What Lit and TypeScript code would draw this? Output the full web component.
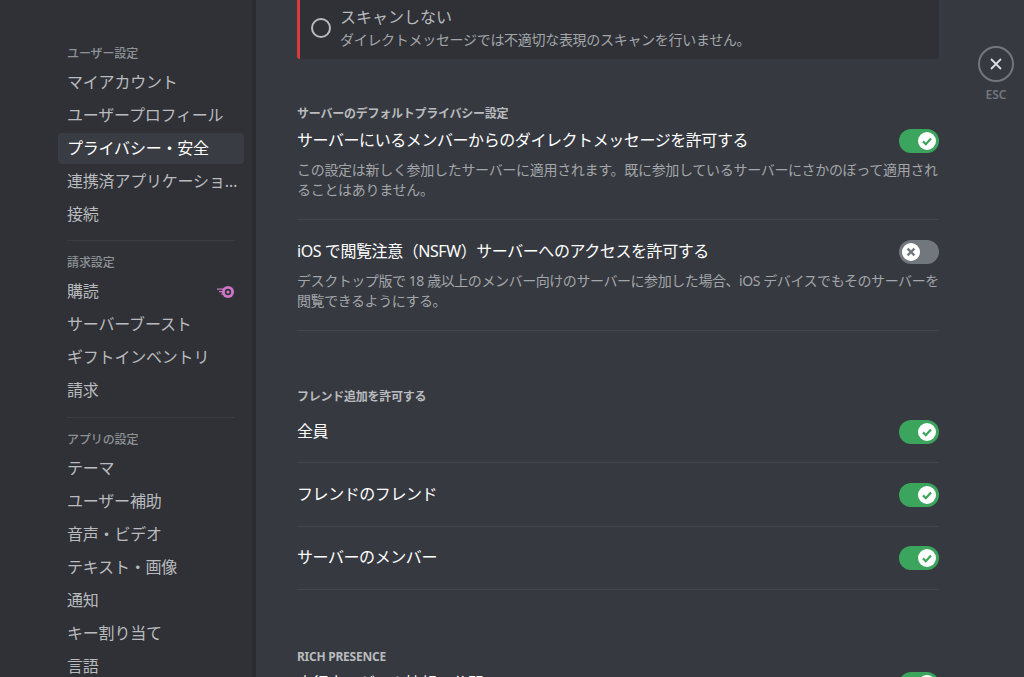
import { LitElement, html, css, svg } from 'lit';
import { customElement } from 'lit/decorators.js';

const NITRO = svg`
  <circle cx="12" cy="7" r="6" fill="currentColor" />
  <circle cx="12" cy="7" r="3.2" fill="#2f3136" />
  <circle cx="12" cy="7" r="1.6" fill="currentColor" />
  <path fill="currentColor" d="M1 3.5h7v1.2H1zM3 6h4v1.2H3zM5 8.4h2v1.2H5z" />
`;

@customElement('app-switch')
export class AppSwitch extends LitElement {
  static properties = { on: { type: Boolean } };
  declare on: boolean;

  static styles = css`
    :host {
      display: block;
      flex: none;
    }
    .track {
      display: flex;
      align-items: center;
      width: 40px;
      height: 24px;
      border-radius: 14px;
      padding: 0 3px;
      box-sizing: border-box;
      background: #72767d;
    }
    .track.on {
      background: #3ba55d;
      justify-content: flex-end;
    }
    .knob {
      display: flex;
      align-items: center;
      justify-content: center;
      width: 18px;
      height: 18px;
      border-radius: 50%;
      background: #fff;
    }
    svg {
      width: 12px;
      height: 12px;
      fill: none;
      stroke-width: 2.2;
    }
    .on svg {
      stroke: #3ba55d;
    }
    .off svg {
      stroke: #72767d;
    }
  `;

  render() {
    return html`
      <div class="track ${this.on ? 'on' : 'off'}">
        <div class="knob">
          <svg viewBox="0 0 12 12">
            ${this.on
              ? svg`<path d="M2 6.4l2.8 2.8L10 3.4"/>`
              : svg`<path d="M2.6 2.6l6.8 6.8M9.4 2.6l-6.8 6.8"/>`}
          </svg>
        </div>
      </div>
    `;
  }
}

@customElement('app-root')
export class AppRoot extends LitElement {
  static styles = css`
    :host {
      display: flex;
      width: 1024px;
      height: 677px;
      overflow: hidden;
      background: #36393f;
      font-family: 'Noto Sans', 'Noto Sans CJK JP', sans-serif;
    }

    /* sidebar */
    .side {
      flex: none;
      width: 256px;
      height: 677px;
      box-sizing: border-box;
      padding: 46px 8px 0 58px;
      background: #2f3136;
      border-right: 4px solid #2a2c30;
      overflow: hidden;
    }
    .side-head {
      height: 16px;
      line-height: 16px;
      padding-left: 9px;
      margin-bottom: 5px;
      font-size: 12px;
      font-weight: 500;
      letter-spacing: -0.1px;
      color: #8e9297;
    }
    .item {
      display: flex;
      align-items: center;
      justify-content: space-between;
      height: 31px;
      margin-bottom: 2px;
      padding: 0 6px 0 9px;
      border-radius: 4px;
      font-size: 16px;
      letter-spacing: -0.2px;
      color: #b9bbbe;
      white-space: nowrap;
    }
    .item.active {
      background: #393c43;
      color: #fff;
    }
    .item span {
      overflow: hidden;
      text-overflow: ellipsis;
      margin-bottom: 4px;
    }
    .item svg {
      flex: none;
      width: 18px;
      height: 14px;
      margin-right: 4px;
      color: #d177cb;
    }
    .side-sep {
      height: 1px;
      margin: 10px 9px 14px;
      background: #393c41;
    }
    .side-sep.wide {
      margin-top: 11px;
    }

    /* main column */
    .main {
      flex: none;
      width: 642px;
      margin-left: 41px;
    }
    .radio-card {
      display: flex;
      align-items: center;
      gap: 9px;
      height: 59px;
      box-sizing: border-box;
      padding: 0 10px 3px 11px;
      background: #2f3136;
      border-left: 3px solid #d83c3e;
      border-bottom-left-radius: 3px;
      border-bottom-right-radius: 3px;
    }
    .radio {
      flex: none;
      width: 20px;
      height: 20px;
      box-sizing: border-box;
      border: 2px solid #b9bbbe;
      border-radius: 50%;
    }
    .radio-title {
      font-size: 16px;
      line-height: 22px;
      color: #b9bbbe;
    }
    .radio-sub {
      font-size: 14px;
      line-height: 20px;
      margin-top: 2px;
      letter-spacing: -0.3px;
      color: #a3a6aa;
    }
    .head {
      height: 16px;
      line-height: 18px;
      font-size: 12px;
      font-weight: 700;
      letter-spacing: -0.25px;
      color: #b9bbbe;
    }
    .head.first {
      margin-top: 46px;
    }
    .head.friend {
      margin-top: 57px;
    }
    .head.rich {
      margin-top: 58px;
    }
    .row {
      display: flex;
      align-items: center;
      justify-content: space-between;
      height: 24px;
      font-size: 16px;
      letter-spacing: -0.43px;
      color: #fff;
    }
    .row span {
      margin-bottom: 4px;
    }
    .desc {
      margin-top: 7px;
      font-size: 14px;
      line-height: 20px;
      letter-spacing: -0.3px;
      color: #a3a6aa;
    }
    .desc.tight {
      letter-spacing: -0.43px;
    }
    .sep {
      height: 1px;
      background: #42454a;
    }
    .setting {
      padding: 8px 0 19px;
    }
    .setting + .sep + .setting {
      padding-top: 20px;
    }
    .opt {
      padding: 20px 0 19px;
    }
    .opt.top {
      padding: 16px 0 18px;
    }
    .opt.tight {
      padding-top: 19px;
    }
    .opt.last {
      padding: 8px 0 0;
    }

    /* close */
    .close {
      flex: none;
      display: flex;
      flex-direction: column;
      align-items: center;
      margin: 46px 0 0 39px;
      width: 36px;
    }
    .close-circle {
      display: flex;
      align-items: center;
      justify-content: center;
      width: 36px;
      height: 36px;
      box-sizing: border-box;
      border: 2px solid #72767d;
      border-radius: 50%;
    }
    .close-circle svg {
      width: 18px;
      height: 18px;
      fill: none;
      stroke: #dcddde;
      stroke-width: 1.8;
    }
    .esc {
      margin-top: 6px;
      font-size: 12px;
      line-height: 13px;
      font-weight: 600;
      color: #72767d;
    }
  `;

  private sideItem(label: string, active = false) {
    return html`<div class="item ${active ? 'active' : ''}"><span>${label}</span></div>`;
  }

  private option(label: string, cls = '') {
    return html`
      <div class="opt ${cls}">
        <div class="row"><span>${label}</span><app-switch on></app-switch></div>
      </div>
      <div class="sep"></div>
    `;
  }

  render() {
    return html`
      <nav class="side">
        <div class="side-head">ユーザー設定</div>
        ${this.sideItem('マイアカウント')} ${this.sideItem('ユーザープロフィール')}
        ${this.sideItem('プライバシー・安全', true)} ${this.sideItem('連携済アプリケーション')}
        ${this.sideItem('接続')}
        <div class="side-sep"></div>
        <div class="side-head">請求設定</div>
        <div class="item">
          <span>購読</span>
          <svg viewBox="0 0 18 14">${NITRO}</svg>
        </div>
        ${this.sideItem('サーバーブースト')} ${this.sideItem('ギフトインベントリ')}
        ${this.sideItem('請求')}
        <div class="side-sep wide"></div>
        <div class="side-head">アプリの設定</div>
        ${this.sideItem('テーマ')} ${this.sideItem('ユーザー補助')} ${this.sideItem('音声・ビデオ')}
        ${this.sideItem('テキスト・画像')} ${this.sideItem('通知')} ${this.sideItem('キー割り当て')}
        ${this.sideItem('言語')}
      </nav>

      <main class="main">
        <div class="radio-card">
          <div class="radio"></div>
          <div>
            <div class="radio-title">スキャンしない</div>
            <div class="radio-sub">ダイレクトメッセージでは不適切な表現のスキャンを行いません。</div>
          </div>
        </div>

        <div class="head first">サーバーのデフォルトプライバシー設定</div>
        <div class="setting">
          <div class="row"><span>サーバーにいるメンバーからのダイレクトメッセージを許可する</span><app-switch on></app-switch></div>
          <div class="desc">この設定は新しく参加したサーバーに適用されます。既に参加しているサーバーにさかのぼって適用されることはありません。</div>
        </div>
        <div class="sep"></div>
        <div class="setting">
          <div class="row"><span>iOS で閲覧注意（NSFW）サーバーへのアクセスを許可する</span><app-switch></app-switch></div>
          <div class="desc tight">デスクトップ版で 18 歳以上のメンバー向けのサーバーに参加した場合、iOS デバイスでもそのサーバーを閲覧できるようにする。</div>
        </div>
        <div class="sep"></div>

        <div class="head friend">フレンド追加を許可する</div>
        ${this.option('全員', 'top')} ${this.option('フレンドのフレンド')}
        ${this.option('サーバーのメンバー', 'tight')}

        <div class="head rich">RICH PRESENCE</div>
        <div class="opt last">
          <div class="row"><span>実行中のゲーム情報の公開</span><app-switch on></app-switch></div>
        </div>
      </main>

      <div class="close">
        <div class="close-circle">
          <svg viewBox="0 0 18 18"><path d="M4 4l10 10M14 4L4 14" /></svg>
        </div>
        <div class="esc">ESC</div>
      </div>
    `;
  }
}
